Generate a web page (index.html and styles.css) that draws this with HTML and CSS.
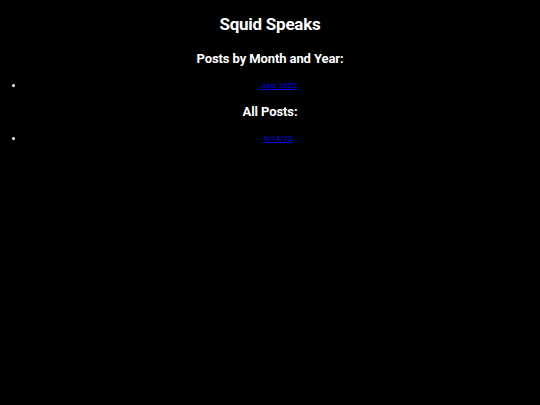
FILE: index.html
```html
<!DOCTYPE html>
<html lang="en">

<head>
    <meta charset="UTF-8">
    <meta name="viewport" content="width=device-width, initial-scale=1.0">
    <title>Squid Speaks</title>
    <link rel="stylesheet" href="styles.css">
</head>

<body>
    <h1>Squid Speaks</h1>

    <h2>Posts by Month and Year:</h2>
    <ul class="post-list">
        <li><a href="#">June 2023</a></li>
    </ul>

    <h2>All Posts:</h2>
    <ul class="post-list">
        <li><a href="#">6/14/23</a></li>
    </ul>
</body>

</html>
```

FILE: styles.css
```css
/* Styles for the body */
body {
    background-color: #000;
    color: #fff;
    font-family: Roboto, "DejaVu Sans", sans-serif;
    text-align: center;
    margin: 0 8px;
    padding-top: 14px;
}

/* Page title */
h1 {
    font-size: 17px;
    letter-spacing: -0.25px;
    margin: 0 0 17px;
}

/* Section headings */
h2 {
    font-size: 13px;
    letter-spacing: -0.1px;
    margin: 0 0 14px;
}

/* Lists of posts */
.post-list {
    padding-left: 16px;
    margin: 0 0 14px;
    font-size: 9px;
}

.post-list a {
    color: #0000ee;
    font-size: 8px;
}
```
